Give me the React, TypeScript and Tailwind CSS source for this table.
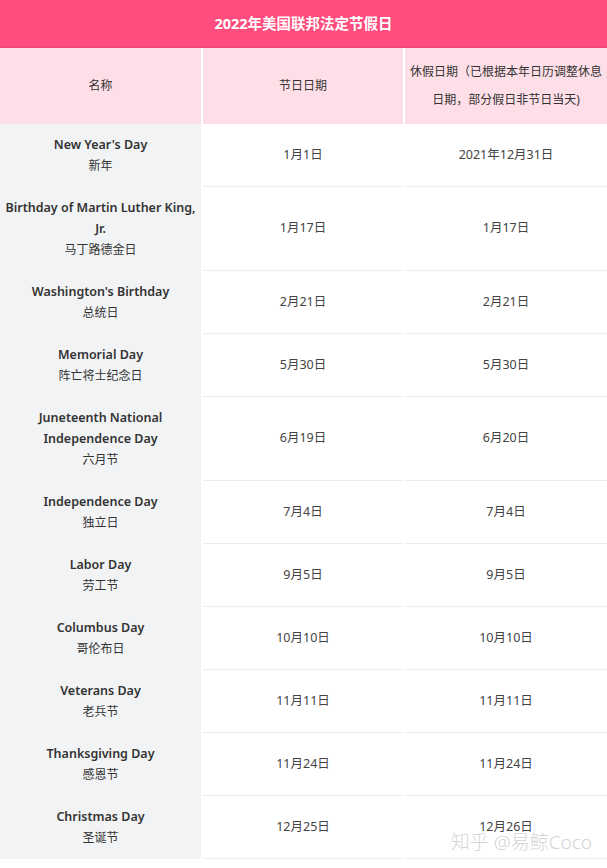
import React from 'react';

type Row = {
  en: string[];
  zh: string;
  date: string;
  off: string;
};

const ROWS: Row[] = [
  { en: ["New Year's Day"], zh: '新年', date: '1月1日', off: '2021年12月31日' },
  { en: ['Birthday of Martin Luther King,', 'Jr.'], zh: '马丁路德金日', date: '1月17日', off: '1月17日' },
  { en: ["Washington's Birthday"], zh: '总统日', date: '2月21日', off: '2月21日' },
  { en: ['Memorial Day'], zh: '阵亡将士纪念日', date: '5月30日', off: '5月30日' },
  { en: ['Juneteenth National', 'Independence Day'], zh: '六月节', date: '6月19日', off: '6月20日' },
  { en: ['Independence Day'], zh: '独立日', date: '7月4日', off: '7月4日' },
  { en: ['Labor Day'], zh: '劳工节', date: '9月5日', off: '9月5日' },
  { en: ['Columbus Day'], zh: '哥伦布日', date: '10月10日', off: '10月10日' },
  { en: ['Veterans Day'], zh: '老兵节', date: '11月11日', off: '11月11日' },
  { en: ['Thanksgiving Day'], zh: '感恩节', date: '11月24日', off: '11月24日' },
  { en: ['Christmas Day'], zh: '圣诞节', date: '12月25日', off: '12月26日' },
];

const font = "font-['Noto_Sans','Noto_Sans_CJK_SC',sans-serif]";

export default function App() {
  return (
    <div className={`relative w-[607px] h-[868px] bg-white overflow-hidden ${font}`}>
      <div className="h-[48px] flex items-center justify-center bg-[#ff4d7e] shadow-[inset_0_-2px_0_#f2477a] text-white text-[14.5px] font-bold">
        2022年美国联邦法定节假日
      </div>

      <div className="grid grid-cols-[201px_200px_202px] gap-x-[2px]">
        {/* header */}
        <div className="h-[76px] bg-[#ffdfe7] flex items-center justify-center text-[12px] text-[#333]">名称</div>
        <div className="h-[76px] bg-[#ffdfe7] flex items-center justify-center text-[12px] text-[#333]">节日日期</div>
        <div className="h-[76px] bg-[#ffdfe7] flex flex-col items-center justify-center text-[12px] leading-[28px] text-[#333] whitespace-nowrap">
          <span>休假日期（已根据本年日历调整休息</span>
          <span>日期，部分假日非节日当天)</span>
        </div>

        {ROWS.map((r, i) => (
          <React.Fragment key={i}>
            <div className="bg-[#f2f3f5] py-[10px] pb-[11px] flex flex-col items-center justify-center text-center leading-[21px] text-[#333] whitespace-nowrap">
              {r.en.map((l) => (
                <span key={l} className="text-[12.5px] font-semibold">{l}</span>
              ))}
              <span className="text-[12px]">{r.zh}</span>
            </div>
            <div className="border-b border-[#ededed] flex items-center justify-center text-[12.5px] text-[#444]">{r.date}</div>
            <div className="border-b border-[#ededed] flex items-center justify-center text-[12.5px] text-[#444]">{r.off}</div>
          </React.Fragment>
        ))}
      </div>

      <div className="absolute right-[15px] bottom-[16px] text-[19px] font-light text-[#d4d4d4] leading-none">
        知乎 @易鲸Coco
      </div>
    </div>
  );
}
